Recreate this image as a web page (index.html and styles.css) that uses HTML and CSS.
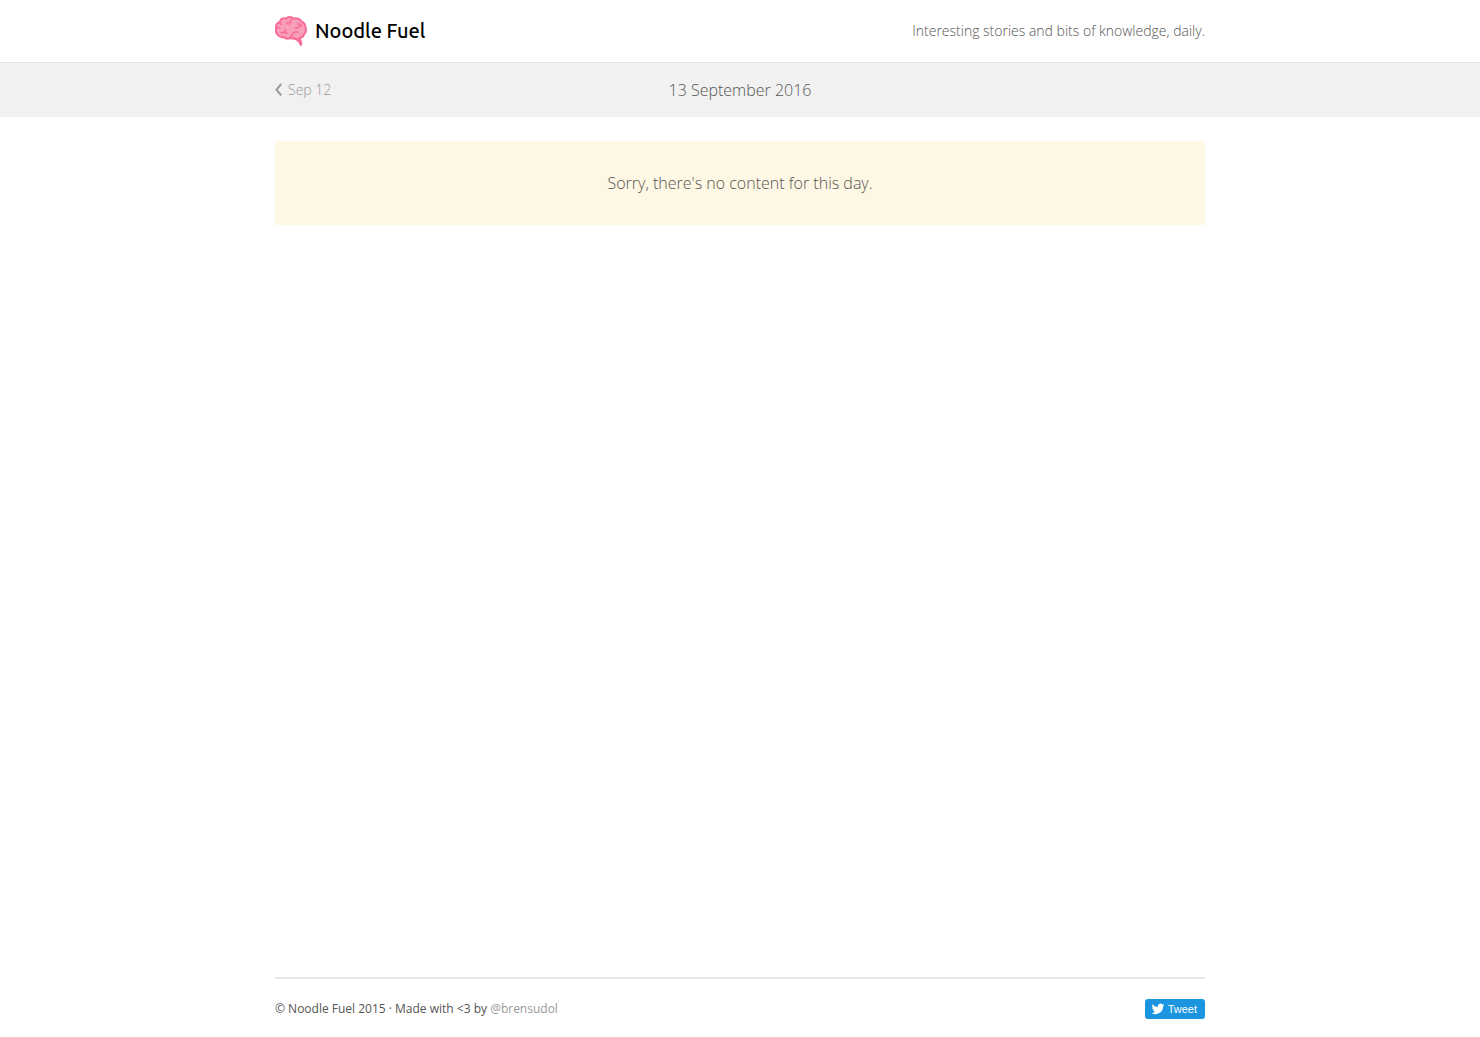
FILE: index.html
```html
<!DOCTYPE html>
<html lang="en">
<head>
    <meta charset="UTF-8">
    <meta name="viewport" content="width=device-width, initial-scale=1">
    <title>Noodle Fuel</title>
    <link rel="stylesheet" href="styles.css">
</head>
<body>
    <header class="header">
        <div class="container header-inner">
            <a class="logo" href="/">
                <svg class="logo-icon" width="32" height="30" viewBox="0 0 32 30" aria-hidden="true">
                    <path class="brain-fill" d="M19 22.200c2 1 4 .9 5.500 0 2.500-.3 4-1.500 4.300-3.500 1.700-1.500 2.500-4 2-6.500C30.500 9 29 6.500 26.500 5.500 25 3 21.500 1.800 18.500 2.500 16.500.6 13 .6 11 2.500 8 2 5.500 3.500 4.800 6 2 7 .7 9.500 1.200 12c-.8 2.500-.3 5 1.500 6.800 1.300 2 3.500 2.700 5.800 2.200 2 1.800 4.500 2 6.500 .9 1.300.8 2.700 .9 4 .3z"/>
                    <path class="brain-fill" d="M18.500 22.200c2.700.6 5 2.200 6.200 4.300l1 2.500c.6-1 .8-2.200.3-3.500-.4-1.300-1-2.300-2-3.200"/>
                    <path class="brain-fold" d="M18.500 2.500c-2 .3-3 1.500-3 3.300 0 1.500-.5 2.300-1 3M15.500 6.500c-2-.5-3.500 0-4 1.200M4.800 6c0 1 .5 1.800 1.500 2.300M1.200 12c1.300-.8 2.500-.8 3.500 0M6 16.500c2.300.8 4.300-.2 4.500-2.700M9.800 16c1 .3 1.700.8 2 1.500M18 17c0 1.800-1 3-3 4M18 17.500c1.200-1.500 3-2 5-1.300M20 12c3 .3 5-1 5.500-3.500M22.500 8c2-.3 3.800.3 4.500 2"/>
                </svg>
                <span class="logo-text">Noodle Fuel</span>
            </a>
            <p class="tagline">Interesting stories and bits of knowledge, daily.</p>
        </div>
    </header>

    <nav class="date-nav">
        <div class="container date-nav-inner">
            <a class="prev" href="/2016/09/12">
                <svg width="7" height="14" viewBox="0 0 7 14" aria-hidden="true"><path d="M6.200 1L1.500 6.700l4.700 5.700"/></svg>
                Sep 12
            </a>
            <h1 class="date">13 September 2016</h1>
        </div>
    </nav>

    <main class="container main">
        <p class="notice">Sorry, there's no content for this day.</p>
    </main>

    <footer class="container">
        <div class="footer">
            <p class="credits">© Noodle Fuel 2015 · Made with &lt;3 by <a href="https://twitter.com/brensudol">@brensudol</a></p>
            <a class="tweet" href="https://twitter.com/share">
                <svg width="14" height="14" viewBox="0 0 24 24" aria-hidden="true"><path d="M23 5c-.8.400-1.700.6-2.600.7.900-.6 1.600-1.400 2-2.500-.9.500-1.900.9-2.900 1.100a4.500 4.500 0 0 0-7.700 4.100C8 8.200 4.700 6.400 2.500 3.700a4.500 4.500 0 0 0 1.400 6c-.7 0-1.400-.2-2-.6 0 2.200 1.500 4.100 3.600 4.500-.7.200-1.300.2-2 .1.600 1.800 2.200 3.100 4.200 3.100A9.100 9.100 0 0 1 1 18.700a12.800 12.800 0 0 0 19.700-11.400C21.600 6.700 22.400 5.900 23 5z"/></svg>
                Tweet
            </a>
        </div>
    </footer>
</body>
</html>
```

FILE: styles.css
```css
* {
    box-sizing: border-box;
}

body {
    margin: 0;
    min-height: 100vh;
    display: flex;
    flex-direction: column;
    background: #fff;
    color: #555;
    font-family: "Open Sans", sans-serif;
    font-size: 16px;
    font-weight: 300;
    line-height: 24px;
}

a {
    text-decoration: none;
}

p, h1 {
    margin: 0;
}

.container {
    width: 100%;
    max-width: 970px;
    margin: 0 auto;
    padding: 0 20px;
}

/* header */
.header {
    border-bottom: 1px solid #e5e5e5;
}

.header-inner {
    display: flex;
    align-items: center;
    justify-content: space-between;
    padding-top: 16px;
    padding-bottom: 16px;
}

.logo {
    display: flex;
    align-items: center;
    gap: 8px;
    color: #000;
}

.logo-text {
    font-family: Ubuntu, "Noto Sans", sans-serif;
    font-size: 20px;
    font-weight: 500;
}

.brain-fill {
    fill: #fa9fb9;
    stroke: #f76c98;
    stroke-width: 2;
    stroke-linejoin: round;
}

.brain-fold {
    fill: none;
    stroke: #f76c98;
    stroke-width: 1.5;
    stroke-linecap: round;
}

.tagline {
    font-size: 14px;
}

/* date bar */
.date-nav {
    background: #f1f1f1;
}

.date-nav-inner {
    display: grid;
    grid-template-columns: 1fr auto 1fr;
    align-items: center;
    padding-top: 15px;
    padding-bottom: 15px;
}

.prev {
    display: flex;
    align-items: center;
    gap: 6px;
    color: #999;
    font-size: 14px;
}

.prev svg {
    fill: none;
    stroke: #999;
    stroke-width: 2;
}

.date {
    font-size: 16px;
    font-weight: 300;
}

/* content */
.main {
    flex: 1;
    padding-top: 24px;
    padding-bottom: 24px;
}

.notice {
    padding: 30px;
    background: #fef7e3;
    text-align: center;
}

/* footer */
.footer {
    display: flex;
    align-items: center;
    justify-content: space-between;
    padding: 20px 0 18px;
    border-top: 2px solid #e8e8e8;
}

.credits {
    font-size: 12px;
    font-weight: 400;
    line-height: 20px;
}

.credits a {
    color: #999;
}

.tweet {
    display: flex;
    align-items: center;
    gap: 3px;
    height: 20px;
    padding: 0 8px 0 6px;
    border-radius: 3px;
    background: #1b95e0;
    color: #fff;
    font-family: "Liberation Sans", Arial, sans-serif;
    font-size: 11px;
    font-weight: 400;
}

.tweet svg {
    fill: #fff;
}
```
